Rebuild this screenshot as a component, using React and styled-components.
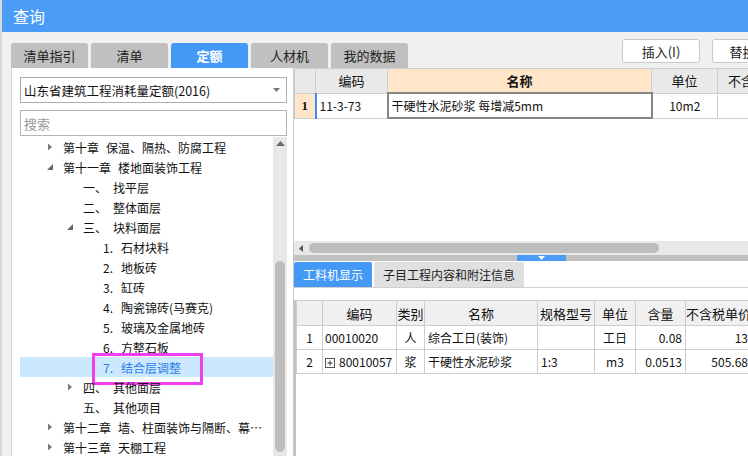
import React from "react";
import styled, { createGlobalStyle } from "styled-components";

const GlobalStyle = createGlobalStyle`
  html, body {
    margin: 0;
    padding: 0;
    background: #ffffff;
    font-family: "Noto Sans CJK SC", "Noto Sans", sans-serif;
    overflow: hidden;
  }
`;

const Window = styled.div`
  width: 748px;
  height: 456px;
  box-sizing: border-box;
  overflow: hidden;
  display: flex;
  flex-direction: column;
  background: #f0f0f0;
  border-left: 2px solid #d8d8d8;
`;

const TitleBar = styled.div`
  height: 32px;
  flex-shrink: 0;
  display: flex;
  align-items: center;
  padding-left: 11px;
  background: #4b9cf6;
  color: #ffffff;
  font-size: 16px;
`;

const TopBar = styled.div`
  height: 36px;
  flex-shrink: 0;
  display: flex;
  padding-left: 9px;
`;

const TabList = styled.div`
  display: flex;
  gap: 3px;
  align-self: flex-end;
  flex-shrink: 0;
`;

const Tab = styled.div`
  width: 77px;
  height: 25px;
  display: flex;
  align-items: center;
  justify-content: center;
  border-radius: 3px 3px 0 0;
  background: ${(p) => (p.$active ? "#4499f7" : "#c0c0c0")};
  color: ${(p) => (p.$active ? "#ffffff" : "#222222")};
  font-weight: ${(p) => (p.$active ? 700 : 400)};
  font-size: 13px;
`;

const ButtonGroup = styled.div`
  display: flex;
  gap: 12px;
  margin-left: 214px;
  margin-top: 7px;
  align-self: flex-start;
  flex-shrink: 0;
`;

const ToolButton = styled.button`
  width: 78px;
  height: 24px;
  flex-shrink: 0;
  padding: 0;
  background: #ffffff;
  border: 1px solid #c9c9c9;
  border-radius: 3px;
  font-family: inherit;
  font-size: 13px;
  color: #222222;
`;

const Panels = styled.div`
  flex: 1;
  min-height: 0;
  display: flex;
`;

const LeftPanel = styled.div`
  width: 282px;
  margin-left: 9px;
  flex-shrink: 0;
  box-sizing: border-box;
  display: flex;
  flex-direction: column;
  padding: 9px 6px 0 8px;
  background: #ffffff;
  border-left: 1px solid #d4d4d4;
`;

const SelectBox = styled.div`
  height: 26px;
  box-sizing: border-box;
  display: flex;
  align-items: center;
  justify-content: space-between;
  padding: 0 6px 0 3px;
  border: 1px solid #adadad;
  font-size: 12.5px;
  color: #111111;
`;

const SearchBox = styled.div`
  height: 26px;
  margin-top: 7px;
  box-sizing: border-box;
  display: flex;
  align-items: center;
  padding-left: 3px;
  border: 1px solid #b5b5b5;
  font-size: 13px;
  color: #9a9a9a;
`;

const TreeWrap = styled.div`
  flex: 1;
  min-height: 0;
  margin-top: 1px;
  display: flex;
`;

const TreeList = styled.div`
  flex: 1;
  min-width: 0;
`;

const TreeRow = styled.div`
  position: relative;
  height: 20px;
  display: flex;
  align-items: center;
  padding-left: ${(p) => 24 + (p.$level - 1) * 20}px;
  padding-right: 10px;
  background: ${(p) => (p.$selected ? "#cce8ff" : "transparent")};
  color: ${(p) => (p.$selected ? "#2b7de9" : "#111111")};
  font-size: 12px;
  white-space: nowrap;
`;

const Toggle = styled.span`
  width: 19px;
  flex-shrink: 0;
  display: flex;
  align-items: center;
  padding-left: 3px;
  box-sizing: border-box;
`;

const Num = styled.span`
  flex-shrink: 0;
  width: ${(p) => (p.$w ? `${p.$w}px` : "auto")};
  margin-right: ${(p) => (p.$w ? 0 : 7)}px;
`;

const Label = styled.span`
  overflow: hidden;
  text-overflow: ellipsis;
`;

const Annotation = styled.div`
  position: absolute;
  left: 72px;
  top: -4px;
  width: 111px;
  height: 32px;
  box-sizing: border-box;
  border: 3px solid #f23cf0;
  pointer-events: none;
`;

const VScroll = styled.div`
  width: 14px;
  flex-shrink: 0;
  display: flex;
  flex-direction: column;
  align-items: center;
  background: #e8e8e8;
`;

const ScrollArrow = styled.div`
  margin-top: 4px;
  display: flex;
`;

const VThumb = styled.div`
  width: 10px;
  height: 191px;
  margin-top: auto;
  margin-bottom: 4px;
  border-radius: 5px;
  background: #bdbdbd;
`;

const RightPanel = styled.div`
  flex: 1;
  min-width: 0;
  display: flex;
  flex-direction: column;
  overflow: hidden;
  background: #ffffff;
  border-left: 1px solid #c8c8c8;
`;

const UpperArea = styled.div`
  height: 173px;
  flex-shrink: 0;
  overflow: hidden;
`;

const Grid = styled.table`
  table-layout: fixed;
  border-collapse: collapse;
  width: ${(p) => p.$width}px;
  font-size: 12px;
  color: #111111;
`;

const Th = styled.th`
  height: ${(p) => p.$h || 23}px;
  padding: 0;
  border: 1px solid #cdcdcd;
  background: ${(p) => (p.$hl ? "#ffe6c9" : p.$bg || "#e9e9e9")};
  font-weight: ${(p) => (p.$hl ? 700 : 400)};
  font-size: 13px;
  text-align: center;
  white-space: nowrap;
  overflow: hidden;
`;

const Td = styled.td`
  height: 23px;
  padding: 0 ${(p) => (p.$tight ? 2 : 3)}px;
  border: 1px solid #cdcdcd;
  text-align: ${(p) => p.$align || "left"};
  white-space: nowrap;
  overflow: hidden;
`;

const RowHead = styled(Td)`
  background: #ffe6c9;
  font-weight: 700;
  font-family: "Liberation Serif", serif;
  font-size: 13px;
  text-align: center;
`;

const CodeCell = styled(Td)`
  border-left: 2px solid #3a8ef5;
`;

const EditCell = styled(Td)`
  border: 2px solid #858585;
`;

const HScroll = styled.div`
  height: 14px;
  flex-shrink: 0;
  display: flex;
  align-items: center;
  padding-left: 5px;
  background: #e8e8e8;
`;

const HThumb = styled.div`
  width: 350px;
  height: 10px;
  flex-shrink: 0;
  margin-left: 6px;
  border-radius: 5px;
  background: #bdbdbd;
`;

const Splitter = styled.div`
  height: 6px;
  flex-shrink: 0;
  display: flex;
  background: #c2c2c2;
`;

const SplitHandle = styled.div`
  width: 49px;
  margin-left: 223px;
  display: flex;
  align-items: center;
  justify-content: center;
  background: #4a9cf6;
`;

const SubTabs = styled.div`
  display: flex;
  gap: 2px;
  padding-top: 1px;
  flex-shrink: 0;
  border-bottom: 1px solid #d0d0d0;
`;

const SubTab = styled.div`
  height: 25px;
  padding: 0 9px;
  display: flex;
  align-items: center;
  border-radius: 2px 2px 0 0;
  background: ${(p) => (p.$active ? "#4499f7" : "#e0e0e0")};
  color: ${(p) => (p.$active ? "#ffffff" : "#222222")};
  font-size: 12px;
`;

const LowerGrid = styled.div`
  flex: 1;
  margin-top: 12px;
  border-left: 2px solid #c4c4c4;
  overflow: hidden;
`;

const PlusBox = styled.span`
  display: inline-flex;
  vertical-align: middle;
  margin: 0 4px 2px 0;
`;

const Tri = ({ d, w, h, fill }) => (
  <svg width={w} height={h} viewBox={`0 0 ${w} ${h}`}>
    <path d={d} fill={fill} />
  </svg>
);

const treeItems = [
  { level: 1, toggle: "closed", num: "第十章", name: "保温、隔热、防腐工程" },
  { level: 1, toggle: "open", num: "第十一章", name: "楼地面装饰工程" },
  { level: 2, num: "一、", name: "找平层" },
  { level: 2, num: "二、", name: "整体面层" },
  { level: 2, toggle: "open", num: "三、", name: "块料面层" },
  { level: 3, num: "1.", name: "石材块料" },
  { level: 3, num: "2.", name: "地板砖" },
  { level: 3, num: "3.", name: "缸砖" },
  { level: 3, num: "4.", name: "陶瓷锦砖(马赛克)" },
  { level: 3, num: "5.", name: "玻璃及金属地砖" },
  { level: 3, num: "6.", name: "方整石板" },
  { level: 3, num: "7.", name: "结合层调整", selected: true },
  { level: 2, toggle: "closed", num: "四、", name: "其他面层" },
  { level: 2, num: "五、", name: "其他项目" },
  { level: 1, toggle: "closed", num: "第十二章", name: "墙、柱面装饰与隔断、幕墙工程" },
  { level: 1, toggle: "closed", num: "第十三章", name: "天棚工程" },
];

const numWidth = { 1: 0, 2: 30, 3: 18 };

const TreeNode = ({ item }) => (
  <TreeRow $level={item.level} $selected={item.selected}>
    <Toggle>
      {item.toggle === "closed" && <Tri w={6} h={8} d="M1 0.5 L5 4 L1 7.5 Z" fill="#7a7a7a" />}
      {item.toggle === "open" && <Tri w={7} h={7} d="M6 0 L6 6 L0 6 Z" fill="#666666" />}
    </Toggle>
    <Num $w={numWidth[item.level]}>{item.num}</Num>
    <Label>{item.name}</Label>
    {item.selected && <Annotation />}
  </TreeRow>
);

const lowerRows = [
  { no: 1, code: "00010020", type: "人", name: "综合工日(装饰)", spec: "", unit: "工日", qty: "0.08", price: "13" },
  { no: 2, code: "80010057", expand: true, type: "浆", name: "干硬性水泥砂浆", spec: "1:3", unit: "m3", qty: "0.0513", price: "505.68" },
];

const App = () => {
  return (
    <Window>
      <GlobalStyle />
      <TitleBar>查询</TitleBar>
      <TopBar>
        <TabList>
          <Tab>清单指引</Tab>
          <Tab>清单</Tab>
          <Tab $active>定额</Tab>
          <Tab>人材机</Tab>
          <Tab>我的数据</Tab>
        </TabList>
        <ButtonGroup>
          <ToolButton>插入(I)</ToolButton>
          <ToolButton>替换(R)</ToolButton>
        </ButtonGroup>
      </TopBar>
      <Panels>
        <LeftPanel>
          <SelectBox>
            <span>山东省建筑工程消耗量定额(2016)</span>
            <Tri w={7} h={4} d="M0 0 H7 L3.5 4 Z" fill="#7a7a7a" />
          </SelectBox>
          <SearchBox>搜索</SearchBox>
          <TreeWrap>
            <TreeList>
              {treeItems.map((item, i) => (
                <TreeNode key={i} item={item} />
              ))}
            </TreeList>
            <VScroll>
              <ScrollArrow>
                <Tri w={9} h={5} d="M0 5 L4.5 0 L9 5 Z" fill="#6a6a6a" />
              </ScrollArrow>
              <VThumb />
            </VScroll>
          </TreeWrap>
        </LeftPanel>

        <RightPanel>
          <UpperArea>
            <Grid $width={509}>
              <colgroup>
                <col style={{ width: 21 }} />
                <col style={{ width: 72 }} />
                <col style={{ width: 264 }} />
                <col style={{ width: 66 }} />
                <col style={{ width: 86 }} />
              </colgroup>
              <thead>
                <tr>
                  <Th />
                  <Th>编码</Th>
                  <Th $hl>名称</Th>
                  <Th>单位</Th>
                  <Th>不含税单价</Th>
                </tr>
              </thead>
              <tbody>
                <tr>
                  <RowHead>1</RowHead>
                  <CodeCell>11-3-73</CodeCell>
                  <EditCell>干硬性水泥砂浆 每增减5mm</EditCell>
                  <Td $align="center">10m2</Td>
                  <Td />
                </tr>
              </tbody>
            </Grid>
          </UpperArea>
          <HScroll>
            <Tri w={4} h={7} d="M4 0 L0 3.5 L4 7 Z" fill="#555555" />
            <HThumb />
          </HScroll>
          <Splitter>
            <SplitHandle>
              <Tri w={7} h={4} d="M0 0 H7 L3.5 4 Z" fill="#ffffff" />
            </SplitHandle>
          </Splitter>
          <SubTabs>
            <SubTab $active>工料机显示</SubTab>
            <SubTab>子目工程内容和附注信息</SubTab>
          </SubTabs>
          <LowerGrid>
            <Grid $width={455}>
              <colgroup>
                <col style={{ width: 26 }} />
                <col style={{ width: 74 }} />
                <col style={{ width: 28 }} />
                <col style={{ width: 113 }} />
                <col style={{ width: 57 }} />
                <col style={{ width: 41 }} />
                <col style={{ width: 50 }} />
                <col style={{ width: 66 }} />
              </colgroup>
              <thead>
                <tr>
                  <Th $h={24} $bg="#f0f0f0" />
                  <Th $h={24} $bg="#f0f0f0">编码</Th>
                  <Th $h={24} $bg="#f0f0f0">类别</Th>
                  <Th $h={24} $bg="#f0f0f0">名称</Th>
                  <Th $h={24} $bg="#f0f0f0">规格型号</Th>
                  <Th $h={24} $bg="#f0f0f0">单位</Th>
                  <Th $h={24} $bg="#f0f0f0">含量</Th>
                  <Th $h={24} $bg="#f0f0f0">不含税单价</Th>
                </tr>
              </thead>
              <tbody>
                {lowerRows.map((r) => (
                  <tr key={r.no}>
                    <Td $align="center">{r.no}</Td>
                    <Td $tight>
                      {r.expand && (
                        <PlusBox>
                          <svg width="10" height="10" viewBox="0 0 10 10">
                            <rect x="0.5" y="0.5" width="9" height="9" fill="#fff" stroke="#555" />
                            <path d="M2.5 5 H7.5 M5 2.5 V7.5" stroke="#333" />
                          </svg>
                        </PlusBox>
                      )}
                      {r.code}
                    </Td>
                    <Td $align="center">{r.type}</Td>
                    <Td>{r.name}</Td>
                    <Td>{r.spec}</Td>
                    <Td $align="center">{r.unit}</Td>
                    <Td $align="right">{r.qty}</Td>
                    <Td $align="right">{r.price}</Td>
                  </tr>
                ))}
              </tbody>
            </Grid>
          </LowerGrid>
        </RightPanel>
      </Panels>
    </Window>
  );
};

export default App;
